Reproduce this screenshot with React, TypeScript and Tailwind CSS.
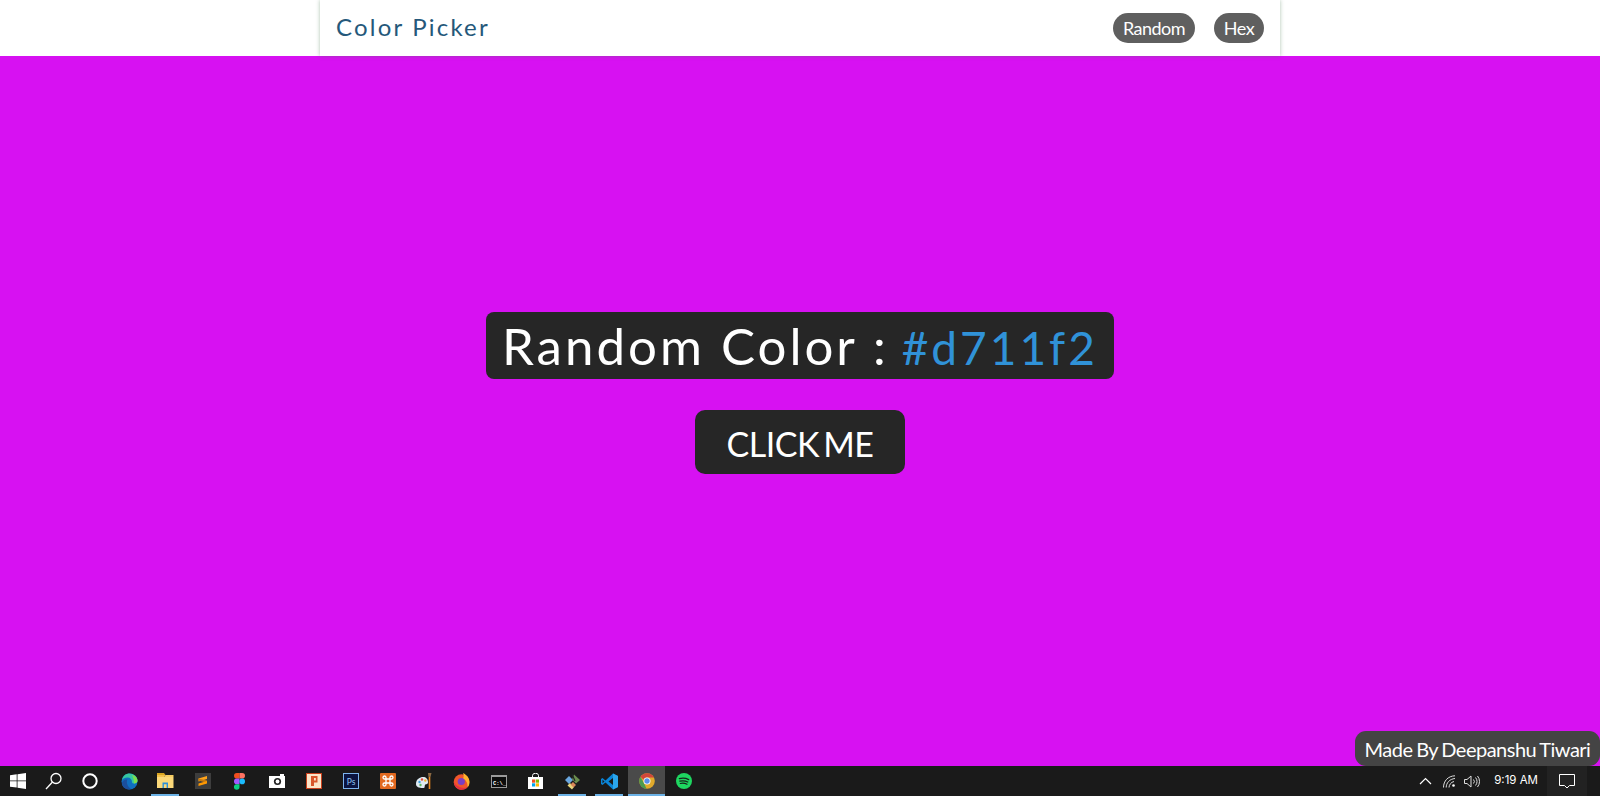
const lato = { fontFamily: 'Lato, sans-serif' };

function WindowsIcon() {
  return (
    <svg width="16" height="16" viewBox="0 0 16 16" fill="#fff">
      <path d="M0 2.300 6.700 1.300V7.500H0ZM7.500 1.200 16 0V7.500H7.500ZM0 8.300H6.700V14.600L0 13.700ZM7.500 8.300H16V16L7.500 14.800Z" />
    </svg>
  );
}

function SearchIcon() {
  return (
    <svg width="18" height="18" viewBox="0 0 18 18" fill="none" stroke="#fff" strokeWidth="1.300">
      <circle cx="11" cy="6.500" r="5" />
      <path d="M7.500 10 1 17" />
    </svg>
  );
}

function CortanaIcon() {
  return (
    <svg width="16" height="16" viewBox="0 0 16 16" fill="none" stroke="#fff" strokeWidth="2">
      <circle cx="8" cy="8" r="6.700" />
    </svg>
  );
}

function EdgeIcon() {
  return (
    <svg width="17" height="17" viewBox="0 0 17 17">
      <circle cx="8.500" cy="8.500" r="8" fill="#0f6fc0" />
      <path d="M1 7C2 2.500 5 .5 8.500.5c4 0 8 3 8 7 0 2-1.500 3-3.500 3-1.500 0-2-.7-2-1.500C11 6 9 4.500 6.500 4.500 4 4.500 2 5.500 1 7Z" fill="#36c7a0" />
      <path d="M11 2c3 .5 5.500 3 5.500 5.500 0 2-1.500 3-3.500 3 0-3-.5-6-2-8.500Z" fill="#7ede4d" />
      <path d="M6.500 6.500c-1.500 2-.5 7 3.500 9.500-4 1.500-8-1-9-5C.5 9 3 6 6.500 6.500Z" fill="#1b4f9c" />
    </svg>
  );
}

function ExplorerIcon() {
  return (
    <svg width="17" height="16" viewBox="0 0 17 16">
      <path d="M0 0H7L8.500 2H0Z" fill="#d9a520" />
      <path d="M0 2H8.500L7 4H0Z" fill="#f3c14b" />
      <path d="M0 4H16.500V15H0Z" fill="#fbd879" />
      <path d="M0 4H7L8.500 2H16.500V4Z" fill="#f6cd62" />
      <path d="M5.500 9.500H11V15H9.600V11.200H6.900V15H5.500Z" fill="#2f8fd8" />
    </svg>
  );
}

function SublimeIcon() {
  return (
    <svg width="16" height="16" viewBox="0 0 16 16">
      <rect width="16" height="16" fill="#3d3d3d" />
      <path d="M3.500 5.500 12 3V6L3.500 8.500Z" fill="#ffa31a" />
      <path d="M3.500 7.500 12 10V7.500L3.500 5.500Z" fill="#c77a10" />
      <path d="M3.500 10.500 12 8V10.500L3.500 13Z" fill="#ff9800" />
    </svg>
  );
}

function FigmaIcon() {
  return (
    <svg width="11" height="17" viewBox="0 0 11 17">
      <path d="M5.500 0H2.800a2.800 2.800 0 0 0 0 5.600H5.500Z" fill="#f24e1e" />
      <path d="M5.500 0H8.200a2.800 2.800 0 0 1 0 5.600H5.500Z" fill="#ff7262" />
      <path d="M5.500 5.600H2.800a2.800 2.800 0 0 0 0 5.600H5.500Z" fill="#a259ff" />
      <circle cx="8.200" cy="8.400" r="2.800" fill="#1abcfe" />
      <path d="M5.500 11.200H2.800a2.800 2.800 0 1 0 2.700 2.800Z" fill="#0acf83" />
    </svg>
  );
}

function CameraIcon() {
  return (
    <svg width="16" height="14" viewBox="0 0 16 14">
      <path d="M0 2H16V14H0Z" fill="#fff" />
      <path d="M11 0H15V2H11Z" fill="#fff" />
      <circle cx="8.500" cy="7.500" r="3.600" fill="#222" />
      <circle cx="8.500" cy="7.500" r="1.900" fill="#fff" />
    </svg>
  );
}

function PowerPointIcon() {
  return (
    <svg width="16" height="16" viewBox="0 0 16 16">
      <rect width="16" height="16" fill="#c8401c" />
      <rect x="1" y="1" width="14" height="14" fill="#fbe4c8" />
      <path d="M5 3H11.500V9.500H8V13H5Z" fill="#d8552a" />
      <path d="M8 5H9.800V7.500H8Z" fill="#fbe4c8" />
    </svg>
  );
}

function PhotoshopIcon() {
  return (
    <svg width="16" height="16" viewBox="0 0 16 16">
      <rect x=".5" y=".5" width="15" height="15" fill="#0a1440" stroke="#7db4ee" />
      <text x="8" y="11.500" textAnchor="middle" fontSize="8.500" fill="#8fc4f5" fontFamily="Lato, sans-serif">Ps</text>
    </svg>
  );
}

function XamppIcon() {
  return (
    <svg width="16" height="16" viewBox="0 0 16 16">
      <rect width="16" height="16" rx="1" fill="#e2691f" />
      <path d="M6 6H10V10H6ZM6 6V4.500A1.500 1.500 0 1 0 4.500 6H6M10 6V4.500A1.500 1.500 0 1 1 11.500 6H10M6 10V11.500A1.500 1.500 0 1 1 4.500 10H6M10 10V11.500A1.500 1.500 0 1 0 11.500 10H10" fill="none" stroke="#fff" strokeWidth="1.300" />
    </svg>
  );
}

function PaintIcon() {
  return (
    <svg width="17" height="17" viewBox="0 0 17 17">
      <path d="M0 11C0 6 4 4 7 4c3 0 5 2 5 5 0 3-2 1.500-3 3-.8 1.300.5 3-2 3C3 15 0 14 0 11Z" fill="#dfeaf2" />
      <circle cx="3.500" cy="9" r="1.200" fill="#3f9fe0" />
      <circle cx="6" cy="6.500" r="1.200" fill="#e44a3b" />
      <circle cx="9.300" cy="7.500" r="1.200" fill="#f2b632" />
      <circle cx="4.500" cy="12" r="1.200" fill="#5cb85c" />
      <path d="M13.500 4V16" stroke="#f08a1d" strokeWidth="1.600" />
      <path d="M12 0H15.500L14.500 4H12.500Z" fill="#8b6a45" />
    </svg>
  );
}

function FirefoxIcon() {
  return (
    <svg width="17" height="17" viewBox="0 0 17 17">
      <circle cx="8.500" cy="9" r="7.800" fill="#f0562b" />
      <path d="M10 0c4 2 6.500 5 6.500 9 0 2-.5 4-2 5.500C15 10 13 7 10 5.500 11 4 10.800 2 10 0Z" fill="#ffb32c" />
      <path d="M.8 9C1 13 4.500 16.800 8.500 16.800c3 0 5-1 6.300-2.800-2 1-6 1.500-9-.5C3.500 12.500 2 11 .8 9Z" fill="#e5303f" />
      <circle cx="8.300" cy="8.500" r="3.600" fill="#7b3fc4" />
    </svg>
  );
}

function CmdIcon() {
  return (
    <svg width="16" height="13" viewBox="0 0 16 13">
      <rect width="16" height="13" fill="#9a9a9a" />
      <rect x="1" y="2" width="14" height="10" fill="#0c0c0c" />
      <text x="2" y="9.500" fontSize="5.500" fontWeight="700" fill="#fff" fontFamily="Liberation Mono, monospace">C:\_</text>
    </svg>
  );
}

function StoreIcon() {
  return (
    <svg width="15" height="16" viewBox="0 0 15 16">
      <path d="M4.500 4V2.500a3 2.200 0 0 1 6 0V4" fill="none" stroke="#fff" />
      <rect y="4" width="15" height="12" fill="#fff" />
      <rect x="4" y="6.500" width="3.200" height="3.200" fill="#f25022" />
      <rect x="7.800" y="6.500" width="3.200" height="3.200" fill="#7fba00" />
      <rect x="4" y="10.300" width="3.200" height="3.200" fill="#00a4ef" />
      <rect x="7.800" y="10.300" width="3.200" height="3.200" fill="#ffb900" />
    </svg>
  );
}

function GitIcon() {
  return (
    <svg width="17" height="17" viewBox="0 0 17 17">
      <path d="M5 3 9 7 5 11 1 7Z" fill="#6aa7e0" />
      <path d="M10 1.500 16 7 12 10.500 8 6.500Z" fill="#6b8e4e" />
      <path d="M6 10 10 14 8 16.500 3.500 12.500Z" fill="#e8d77d" />
      <path d="M9 9 12 12 9.500 14.500 6.500 11.500Z" fill="#d9885a" />
      <path d="M8 1 11 8" stroke="#222" strokeWidth="1.200" />
    </svg>
  );
}

function VscodeIcon() {
  return (
    <svg width="17" height="17" viewBox="0 0 17 17">
      <path d="M12 .5 17 3V14L12 16.500 4.500 9.500 1.500 12 0 11V6L1.500 5 4.500 7.500Z" fill="#0a84d6" />
      <path d="M12 .5 17 3V14L12 16.500Z" fill="#2ba6ec" />
      <path d="M12 5V12L7.500 8.500Z" fill="#1a1a1a" />
      <path d="M1.500 6.700 3.500 8.500 1.500 10.300Z" fill="#1a1a1a" />
    </svg>
  );
}

function ChromeIcon() {
  return (
    <svg width="16" height="16" viewBox="0 0 16 16">
      <circle cx="8" cy="8" r="7.800" fill="#e0a92b" />
      <path d="M1.500 3.800A7.800 7.800 0 0 1 15 4.500H8A3.500 3.500 0 0 0 4.700 6.800Z" fill="#d0463a" />
      <path d="M1.500 3.800 5 10.200 7.500 15.800A7.800 7.800 0 0 1 1.500 3.800Z" fill="#4c9a4f" />
      <circle cx="8" cy="8" r="3.500" fill="#fff" />
      <circle cx="8" cy="8" r="2.700" fill="#5a8fe8" />
    </svg>
  );
}

function SpotifyIcon() {
  return (
    <svg width="16" height="16" viewBox="0 0 16 16">
      <circle cx="8" cy="8" r="8" fill="#1ed760" />
      <path d="M3.300 5.700C6.500 4.900 10 5.200 12.700 6.600M3.800 8.200C6.500 7.500 9.500 7.800 11.800 9M4.300 10.500C6.500 10 9 10.200 11 11.300" fill="none" stroke="#17251b" strokeWidth="1.200" strokeLinecap="round" />
    </svg>
  );
}

const taskbarApps = [
  { icon: <WindowsIcon />, cell: 'w-[36px]' },
  { icon: <SearchIcon />, cell: 'w-[36px]' },
  { icon: <CortanaIcon />, cell: 'w-[36px]' },
  { icon: <EdgeIcon />, cell: 'w-[39px] pl-[3px]' },
  { icon: <ExplorerIcon />, cell: 'w-[37px]', open: true },
  { icon: <SublimeIcon />, cell: 'w-[37px]' },
  { icon: <FigmaIcon />, cell: 'w-[37px]' },
  { icon: <CameraIcon />, cell: 'w-[37px]' },
  { icon: <PowerPointIcon />, cell: 'w-[37px]' },
  { icon: <PhotoshopIcon />, cell: 'w-[37px]' },
  { icon: <XamppIcon />, cell: 'w-[37px]' },
  { icon: <PaintIcon />, cell: 'w-[37px]' },
  { icon: <FirefoxIcon />, cell: 'w-[37px]' },
  { icon: <CmdIcon />, cell: 'w-[37px]' },
  { icon: <StoreIcon />, cell: 'w-[37px]' },
  { icon: <GitIcon />, cell: 'w-[37px]', open: true },
  { icon: <VscodeIcon />, cell: 'w-[37px]', open: true },
  { icon: <ChromeIcon />, cell: 'w-[37px]', open: true, active: true },
  { icon: <SpotifyIcon />, cell: 'w-[37px]' },
];

function Taskbar() {
  return (
    <div className="flex h-[30px] items-stretch justify-between bg-[#1a1a1a]">
      <div className="flex items-stretch">
        {taskbarApps.map((app, i) => (
          <div
            key={i}
            className={`relative flex items-center justify-center ${app.cell} ${app.active ? 'bg-[#4a4a4a]' : ''}`}
          >
            {app.icon}
            {app.open && (
              <span
                className={`absolute bottom-0 h-[2px] bg-[#6cb2e6] ${app.active ? 'left-0 right-0' : 'left-[4px] right-[5px]'}`}
              />
            )}
          </div>
        ))}
      </div>
      <div className="flex items-center text-white">
        <svg width="13" height="8" viewBox="0 0 13 8" fill="none" stroke="#fff" strokeWidth="1.200" className="mr-[11px]">
          <path d="M1 7 6.500 1.500 12 7" />
        </svg>
        <svg width="13" height="13" viewBox="0 0 13 13" fill="none" stroke="#ddd" strokeWidth="1" className="mr-[8px]">
          <path d="M.5 12.500C.5 6 5 1 12 .8M3.200 12.500C3.200 8 6.500 4 12 3.500M6 12.500C6 10 8 7 11 6.500" />
          <circle cx="10.500" cy="10.500" r="1.300" fill="#fff" stroke="none" />
        </svg>
        <svg width="16" height="13" viewBox="0 0 16 13" fill="none" stroke="#ddd" strokeWidth="1" className="mr-[14px]">
          <path d="M.5 4.500H3L7 1V12L3 8.500H.5Z" />
          <path d="M9.500 4.500a3 3 0 0 1 0 4M11.500 2.500a6 6 0 0 1 0 8M13.500 1a8.500 8.500 0 0 1 0 11" />
        </svg>
        <span className="mr-[9px] text-[11.500px]" style={{ fontFamily: 'Inter, sans-serif' }}>9:19 AM</span>
        <div className="flex h-full w-[40px] items-center justify-center bg-[#222222]">
          <svg width="16" height="15" viewBox="0 0 16 15" fill="none" stroke="#fff" strokeWidth="1">
            <path d="M.5.500H15.500V11.500H10.500L8 14 5.500 11.500H.5Z" />
          </svg>
        </div>
        <div className="w-[13px]" />
      </div>
    </div>
  );
}

export default function App() {
  return (
    <div className="relative flex h-[796px] flex-col overflow-hidden bg-[#d711f2]" style={lato}>
      <header className="h-[56px] bg-white">
        <nav className="mx-auto flex h-full w-[960px] items-center justify-between bg-white px-[16px] shadow-[0_0_4px_rgba(70,120,80,0.45)]">
          <span className="pb-[2px] text-[24px] tracking-[2.200px] text-[#25587a]">Color Picker</span>
          <div className="flex items-center gap-[19px]">
            <button className="flex h-[30px] w-[82px] items-center justify-center rounded-[15px] bg-[#5f5f5f] text-[18px] tracking-[-0.500px] text-white">Random</button>
            <button className="flex h-[30px] w-[50px] items-center justify-center rounded-[15px] bg-[#5f5f5f] text-[18px] tracking-[-0.500px] text-white">Hex</button>
          </div>
        </nav>
      </header>

      <main className="flex flex-1 flex-col items-center pt-[256px]">
        <div className="flex h-[67px] w-[628px] items-baseline justify-center gap-[13px] rounded-[8px] bg-[#262626] leading-[67px] tracking-[3px] text-white">
          <span className="text-[51px]">Random Color :</span>
          <span className="text-[46px] text-[#3092d8]">#d711f2</span>
        </div>
        <button className="mt-[31px] flex h-[64px] w-[210px] items-center justify-center rounded-[10px] bg-[#262626] pt-[2px] text-[34px] tracking-[-0.500px] text-white [word-spacing:-4px]">CLICK ME</button>
      </main>

      <Taskbar />

      <div className="absolute bottom-[30px] right-0 flex h-[35px] w-[245px] items-center justify-center rounded-[11px] bg-[#444444] text-[20px] tracking-[-0.500px] text-white [word-spacing:-1px]">
        Made By Deepanshu Tiwari
      </div>
    </div>
  );
}
